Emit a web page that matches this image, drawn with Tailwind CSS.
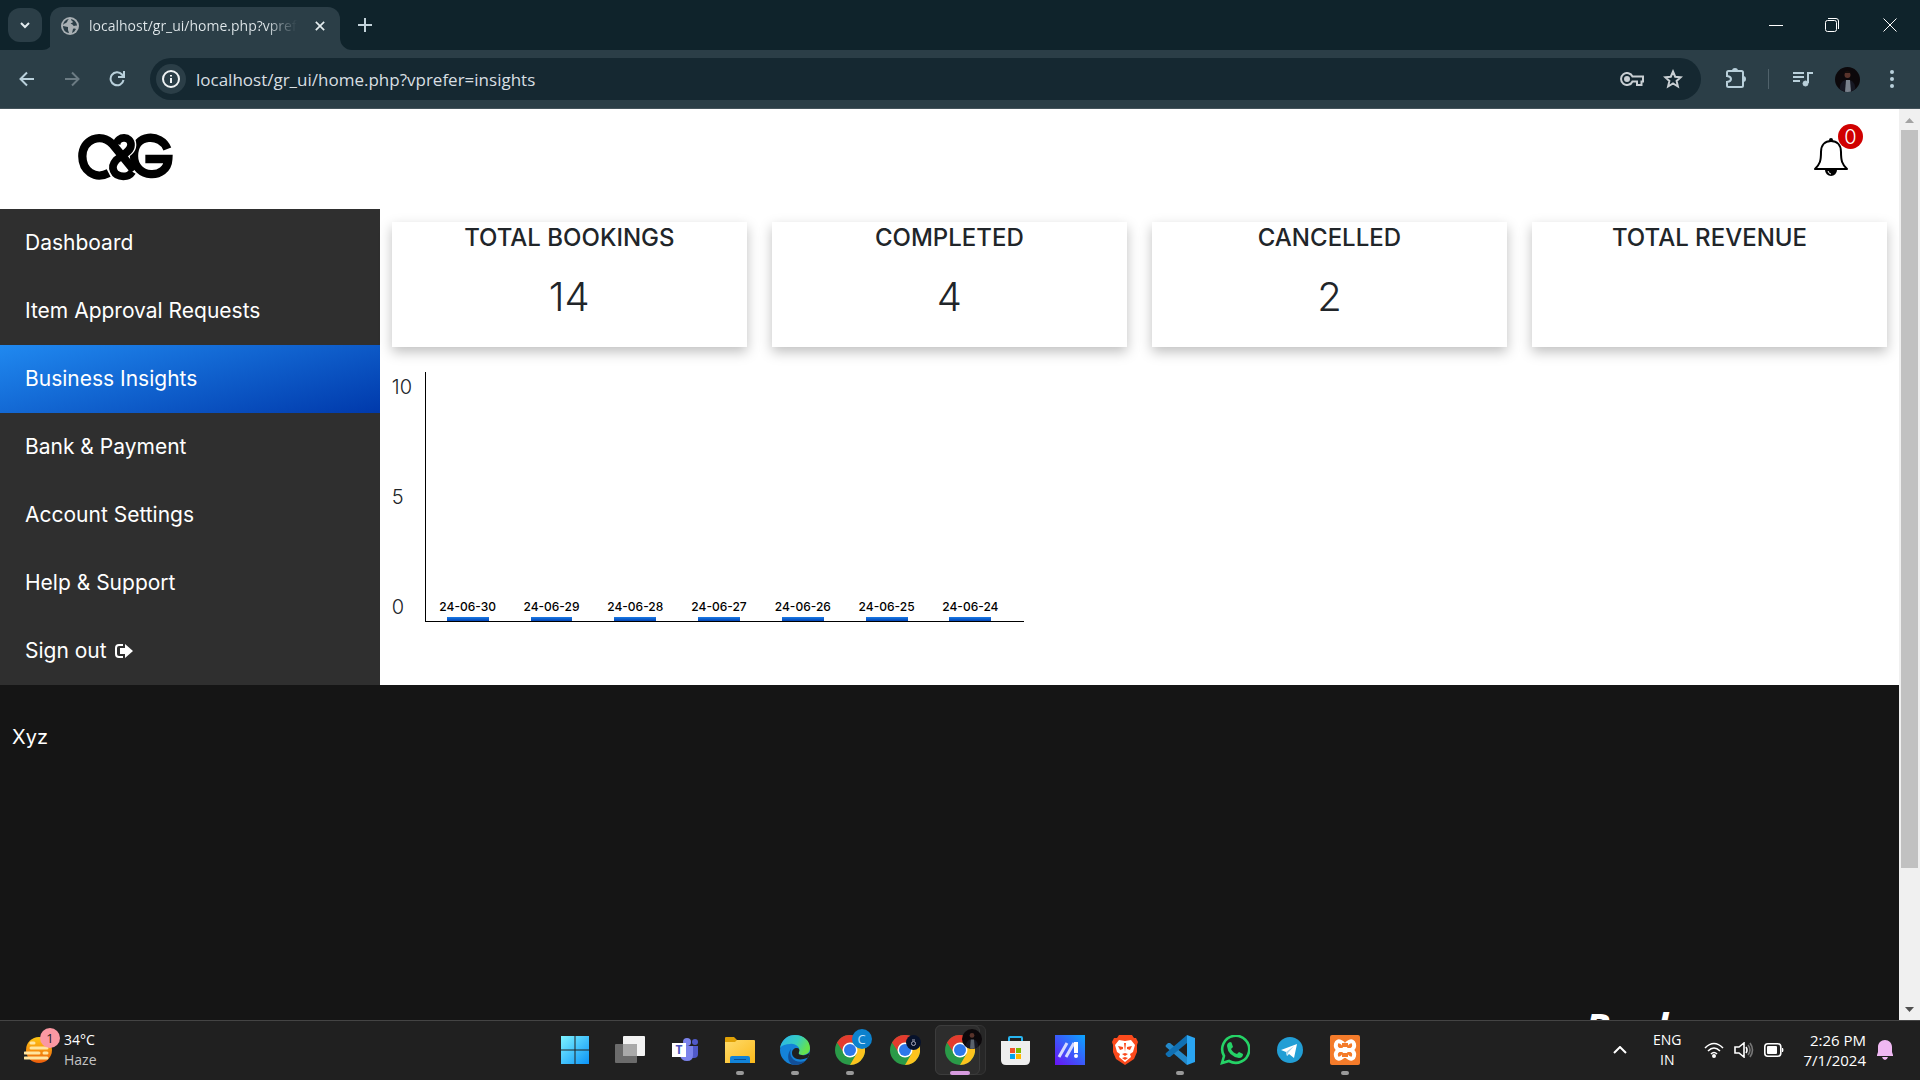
<!DOCTYPE html>
<html lang="en">
<head>
<meta charset="utf-8">
<title>Business Insights</title>
<script src="https://cdn.jsdelivr.net/npm/@tailwindcss/browser@4"></script>
</head>
<body class="flex h-screen flex-col overflow-hidden bg-white font-['Inter',sans-serif] text-[#212529]">

<svg class="absolute size-0" aria-hidden="true">
  <symbol id="chrome" viewBox="0 0 30 30">
    <circle cx="15" cy="15" r="15" fill="#2a9a48"/>
    <path d="M15 7.500H28A15 15 0 0 1 15 30l6.500-11.250Z" fill="#fcc31e"/>
    <path d="M2 7.500A15 15 0 0 1 28 7.500H15L8.500 11.250 8 16.500Z" fill="#e33b2e"/>
    <circle cx="15" cy="15" r="7.500" fill="#fff"/><circle cx="15" cy="15" r="6" fill="#2d78ea"/>
  </symbol>
  <linearGradient id="blueTile" x1="0" y1="0" x2="1" y2="1"><stop stop-color="#7df3ff"/><stop offset="1" stop-color="#0b93f7"/></linearGradient>
  <linearGradient id="edgeTop" x1="0" y1="0" x2="1" y2=".4"><stop stop-color="#2bb4ee"/><stop offset=".6" stop-color="#36cdc0"/><stop offset="1" stop-color="#66e24c"/></linearGradient>
  <linearGradient id="folder" x1="0" y1="0" x2="1" y2="1"><stop stop-color="#ffdb6b"/><stop offset="1" stop-color="#fbb91a"/></linearGradient>
  <linearGradient id="asus" x1="0" y1="1" x2="1" y2="0"><stop stop-color="#6a11f5"/><stop offset="1" stop-color="#0aa6ff"/></linearGradient>
  <linearGradient id="sun" x1="0" y1="0" x2="0" y2="1"><stop stop-color="#ffc814"/><stop offset="1" stop-color="#ec5d0c"/></linearGradient>
</svg>

<!-- Tab strip -->
<div class="flex h-[50px] shrink-0 items-end bg-[#0f232b] pl-2 font-['Open_Sans',sans-serif]">
  <button aria-label="Search tabs" class="mb-2 flex size-[34px] items-center justify-center rounded-xl bg-[#2b3e47]">
    <svg class="size-3" viewBox="0 0 12 12" fill="none" stroke="#e4ecef" stroke-width="2"><path d="M2 4l4 4 4-4"/></svg>
  </button>
  <svg class="size-3" viewBox="0 0 12 12" fill="#2b3e47"><path d="M12 0v12H0A12 12 0 0 0 12 0Z"/></svg>
  <div class="-ml-1 flex h-[43px] w-[290px] items-center rounded-t-xl bg-[#2b3e47] pb-1.5 pl-[11px] pr-3">
    <svg class="size-[18px] shrink-0" viewBox="0 0 18 18"><circle cx="9" cy="9" r="9" fill="#a9b0b4"/><path d="M8 2c-2 1-1 3-3 4S2 7 2 9c2 0 3 1 5 1v3l1 3c-4 0-6-4-6-7 0-4 3-7 6-7Zm2 0c4 1 6 4 6 7-1-1-2 0-3 0s-1-2-3-2c-1-1 2-1 2-2s-2-1-2-3Zm2 10c1-1 3 0 3 0-1 2-2 3-4 4Z" fill="#2b3e47"/></svg>
    <span class="ml-2.5 w-[210px] overflow-hidden whitespace-nowrap bg-linear-to-r from-[#e2e9ec] from-85% to-[#2b3e47] bg-clip-text text-[14px] text-transparent">localhost/gr_ui/home.php?vprefer=insights</span>
    <button aria-label="Close tab" class="ml-[15px] flex size-4 shrink-0 items-center justify-center"><svg class="size-2.5" viewBox="0 0 12 12" stroke="#e4ecef" stroke-width="2"><path d="M1 1l10 10M11 1 1 11"/></svg></button>
  </div>
  <svg class="size-3" viewBox="0 0 12 12" fill="#2b3e47"><path d="M0 0v12h12A12 12 0 0 1 0 0Z"/></svg>
  <button aria-label="New tab" class="mb-4 ml-1 flex size-[18px] items-center justify-center"><svg class="size-[14px]" viewBox="0 0 14 14" stroke="#c3d3da" stroke-width="2"><path d="M7 0v14M0 7h14"/></svg></button>
  <div class="ml-auto flex h-full items-center">
    <button aria-label="Minimize" class="flex w-[56px] justify-center"><svg class="size-[14px]" viewBox="0 0 14 14" stroke="#fff"><path d="M0 7.500h14"/></svg></button>
    <button aria-label="Restore" class="flex w-[56px] justify-center"><svg class="size-[14px]" viewBox="0 0 14 14" stroke="#fff" fill="none"><rect x=".5" y="2.500" width="11" height="11" rx="2"/><path d="M3 .5h8a2.500 2.500 0 0 1 2.500 2.500v8"/></svg></button>
    <button aria-label="Close" class="flex w-[60px] justify-center"><svg class="size-[14px]" viewBox="0 0 14 14" stroke="#fff"><path d="M.5.5l13 13M13.500.5l-13 13"/></svg></button>
  </div>
</div>

<!-- Toolbar -->
<div class="flex h-[59px] shrink-0 items-center border-b border-[#44535b] bg-[#2b3e47]">
  <button aria-label="Back" class="ml-[19px] w-[45px]"><svg class="size-4" viewBox="0 0 16 16" fill="none" stroke="#b9d0db" stroke-width="2"><path d="M15 8H2M8 1.500 1.500 8 8 14.500"/></svg></button>
  <button aria-label="Forward" class="w-[45px]"><svg class="size-4" viewBox="0 0 16 16" fill="none" stroke="#6b7b83" stroke-width="2"><path d="M1 8h13M8 1.500 14.500 8 8 14.500"/></svg></button>
  <button aria-label="Reload" class="w-[41px]"><svg class="size-4" viewBox="0 0 16 16" fill="none" stroke="#b9d0db" stroke-width="2"><path d="M14.500 9A6.500 6.500 0 1 1 13 3.500L14.500 6M15 0v6H9"/></svg></button>
  <div class="flex h-[42px] min-w-0 flex-1 items-center rounded-full bg-[#152831] pl-1.5 pr-[18px]">
    <span class="flex size-[30px] shrink-0 items-center justify-center rounded-full bg-[#2b3e47]"><svg class="size-[18px]" viewBox="0 0 18 18" fill="none" stroke="#f0f3f4" stroke-width="2"><circle cx="9" cy="9" r="8"/><path d="M9 8v5M9 5v1.500"/></svg></span>
    <input aria-label="Address" class="ml-2.5 min-w-0 flex-1 bg-transparent pt-px font-['Open_Sans',sans-serif] text-[17px] text-[#d8dfe2] outline-none" value="localhost/gr_ui/home.php?vprefer=insights">
    <button aria-label="Passwords" class="mr-[19px]"><svg class="h-[14px] w-6" viewBox="0 0 24 14" fill="none" stroke="#c9cfd3" stroke-width="2"><path d="M12.500 4.500A6 6 0 1 0 12.500 9.500H17V13h4.500V9.500H23v-5Z"/><circle cx="7" cy="7" r="2" fill="#c9cfd3"/></svg></button>
    <button aria-label="Bookmark this tab"><svg class="size-5" viewBox="0 0 20 20" fill="none" stroke="#c9cfd3" stroke-width="2"><path d="m10 2.500 2.200 5.200 5.600.5-4.200 3.700 1.300 5.600L10 14.500l-4.900 3 1.300-5.600L2.200 8.200l5.600-.5Z"/></svg></button>
  </div>
  <button aria-label="Extensions" class="ml-6"><svg class="size-[22px]" viewBox="0 0 22 22" fill="none" stroke="#b9d0db" stroke-width="2"><path d="M2 4.500q0-1.500 1.500-1.500h13Q18 3 18 4.500v13q0 1.500-1.500 1.500h-13Q2 19 2 17.500V14q4-.5 4-3T2 8Z"/><path d="M8 3a2 2 0 0 1 4 0M18 9a2 2 0 0 1 0 4" fill="#b9d0db"/></svg></button>
  <span class="ml-[21px] h-5 w-px bg-[#50626b]"></span>
  <button aria-label="Media controls" class="ml-6"><svg class="h-4 w-5" viewBox="0 0 20 16" fill="none" stroke="#b9d0db" stroke-width="2"><path d="M0 2h11M0 6h11M0 10h7M15 12V2h5"/><circle cx="12.500" cy="12.500" r="2.500" fill="#b9d0db" stroke-width="1"/></svg></button>
  <button aria-label="Profile" class="ml-[22px]"><svg class="size-[25px] rounded-full" viewBox="0 0 25 25"><rect width="25" height="25" fill="#0c080b"/><path d="M4 25q1-11 6-12h5q5 1 6 12Z" fill="#161722"/><path d="M11 13h4l1 12h-6Z" fill="#79818c"/><circle cx="12.500" cy="8" r="3" fill="#59332b"/><path d="M9 6q3.500-5 7 0Z" fill="#150d0c"/></svg></button>
  <button aria-label="Menu" class="ml-[30px] mr-[26px]"><svg class="h-[18px] w-1" viewBox="0 0 4 18" fill="#b9d0db"><circle cx="2" cy="2" r="2"/><circle cx="2" cy="9" r="2"/><circle cx="2" cy="16" r="2"/></svg></button>
</div>

<!-- Viewport -->
<div class="flex min-h-0 flex-1">
  <div class="flex min-w-0 flex-1 flex-col">
    <header class="flex h-[100px] shrink-0 items-center justify-between pb-1 pl-[78px] pr-[50px]">
      <a href="#" aria-label="C&amp;G home"><svg class="h-12 w-[95px]" viewBox="0 0 285 144" fill="none" stroke="#000" stroke-width="25">
        <path d="M268 48C250 0 168 0 168 69S268 142 271 78H202"/>
        <g stroke="#fff" stroke-width="28"><path d="M114 34C116 6 162 6 161 36 160 58 130 66 114 82 96 102 106 130 136 130 150 130 158 124 163 116"/></g>
        <path stroke-width="23" d="M116 34C118 8 160 8 159 36 158 58 130 66 114 82 96 102 106 130 136 130 150 130 158 124 163 116"/>
        <path d="M92 120C50 142 13 112 13 70 13 20 68-4 104 34L168 112"/>
      </svg></a>
      <button aria-label="Notifications" class="relative"><svg class="h-[38px] w-9" viewBox="0 0 36 38" fill="none" stroke="#000" stroke-width="2"><path d="M18 3c-6 0-10 4-10 11 0 9-1 12-6 17h32c-5-5-6-8-6-17 0-7-4-11-10-11Z" stroke-linejoin="round"/><path d="M13 32a5 5 0 0 0 10 0Z" fill="#000"/><circle cx="18" cy="2" r="1"/><path d="M15 33q1 3 3 3" stroke="#fff" stroke-width="1"/></svg>
        <span class="absolute -right-3.5 -top-3.5 flex size-[25px] items-center justify-center rounded-full bg-[#d00000] text-xl font-light text-white">0</span></button>
    </header>

    <div class="flex shrink-0">
      <nav class="flex w-1/5 shrink-0 flex-col bg-[#2f2f2f] text-[21px] text-white">
        <a href="#" class="flex h-[68px] items-center px-[25px]">Dashboard</a>
        <a href="#" class="flex h-[68px] items-center px-[25px]">Item Approval Requests</a>
        <a href="#" class="flex h-[68px] items-center bg-[linear-gradient(165deg,#2089f0,#0039ab)] px-[25px]">Business Insights</a>
        <a href="#" class="flex h-[68px] items-center px-[25px]">Bank &amp; Payment</a>
        <a href="#" class="flex h-[68px] items-center px-[25px]">Account Settings</a>
        <a href="#" class="flex h-[68px] items-center px-[25px]">Help &amp; Support</a>
        <a href="#" class="flex h-[68px] items-center gap-2 px-[25px]">Sign out <svg class="h-4 w-[18px]" viewBox="0 0 18 16" fill="#fff"><path d="M5 5h5V1l8 7-8 7v-4H5Z"/><path d="M8 2H4Q1 2 1 5v6q0 3 3 3h4" fill="none" stroke="#fff" stroke-width="2"/></svg></a>
      </nav>

      <main class="min-w-0 flex-1 px-3 pt-[13px]">
        <section class="grid grid-cols-4 gap-[25px] text-center">
          <div class="h-[125px] bg-white shadow-[0_5px_12px_rgba(0,0,0,0.25)]"><h2 class="text-2xl font-medium leading-8">TOTAL BOOKINGS</h2><p class="mt-4 text-[40px] font-light leading-[54px]">14</p></div>
          <div class="h-[125px] bg-white shadow-[0_5px_12px_rgba(0,0,0,0.25)]"><h2 class="text-2xl font-medium leading-8">COMPLETED</h2><p class="mt-4 text-[40px] font-light leading-[54px]">4</p></div>
          <div class="h-[125px] bg-white shadow-[0_5px_12px_rgba(0,0,0,0.25)]"><h2 class="text-2xl font-medium leading-8">CANCELLED</h2><p class="mt-4 text-[40px] font-light leading-[54px]">2</p></div>
          <div class="h-[125px] bg-white shadow-[0_5px_12px_rgba(0,0,0,0.25)]"><h2 class="text-2xl font-medium leading-8">TOTAL REVENUE</h2></div>
        </section>
        <section class="mt-[25px] flex h-[250px] w-[42.3%]">
          <div class="flex w-[33px] shrink-0 flex-col justify-between text-xl font-light leading-[30px]"><span>10</span><span>5</span><span>0</span></div>
          <div class="flex flex-1 items-end border-b border-l border-black text-[12px] font-medium leading-4 text-black">
            <div class="flex w-[14%] flex-col items-center gap-0.5 whitespace-nowrap">24-06-30<span class="h-1 w-1/2 bg-linear-to-b from-[#1a7ae6] to-[#0544b4]"></span></div>
            <div class="flex w-[14%] flex-col items-center gap-0.5 whitespace-nowrap">24-06-29<span class="h-1 w-1/2 bg-linear-to-b from-[#1a7ae6] to-[#0544b4]"></span></div>
            <div class="flex w-[14%] flex-col items-center gap-0.5 whitespace-nowrap">24-06-28<span class="h-1 w-1/2 bg-linear-to-b from-[#1a7ae6] to-[#0544b4]"></span></div>
            <div class="flex w-[14%] flex-col items-center gap-0.5 whitespace-nowrap">24-06-27<span class="h-1 w-1/2 bg-linear-to-b from-[#1a7ae6] to-[#0544b4]"></span></div>
            <div class="flex w-[14%] flex-col items-center gap-0.5 whitespace-nowrap">24-06-26<span class="h-1 w-1/2 bg-linear-to-b from-[#1a7ae6] to-[#0544b4]"></span></div>
            <div class="flex w-[14%] flex-col items-center gap-0.5 whitespace-nowrap">24-06-25<span class="h-1 w-1/2 bg-linear-to-b from-[#1a7ae6] to-[#0544b4]"></span></div>
            <div class="flex w-[14%] flex-col items-center gap-0.5 whitespace-nowrap">24-06-24<span class="h-1 w-1/2 bg-linear-to-b from-[#1a7ae6] to-[#0544b4]"></span></div>
          </div>
        </section>
      </main>
    </div>

    <footer class="min-h-0 flex-1 overflow-hidden bg-[#151515] px-3 pt-9 text-white">
      <p class="text-xl leading-8">Xyz</p>
      <p class="mr-[208px] mt-[246px] text-right font-['Open_Sans',sans-serif] text-[40px] font-bold italic leading-[56px]">Book</p>
    </footer>
  </div>

  <!-- Scrollbar -->
  <div class="flex w-[21px] shrink-0 flex-col items-center bg-[#f0f0f0]" aria-hidden="true">
    <svg class="h-[21px] w-[9px] shrink-0" viewBox="0 0 9 21" fill="#a3a3a3"><path d="M0 14l4.500-5L9 14Z"/></svg>
    <div class="h-[81%] w-[17px] bg-[#c1c1c1]"></div>
    <svg class="mt-auto h-[21px] w-[9px] shrink-0" viewBox="0 0 9 21" fill="#505050"><path d="M0 8l4.500 5L9 8Z"/></svg>
  </div>
</div>

<!-- Taskbar -->
<div class="grid h-[60px] shrink-0 grid-cols-[1fr_auto_1fr] border-t border-[#444] bg-[#202020] font-['Open_Sans',sans-serif] text-[14px] leading-5 text-white">
  <button class="flex items-center gap-3 justify-self-start pb-px pl-6 text-left">
    <span class="relative"><svg class="size-7" viewBox="0 0 28 28"><circle cx="15" cy="14" r="13" fill="url(#sun)"/><path d="M7 7h3M7 12h16M1 17h14M20 17h3M1 22h22" stroke="#ffe5a0" stroke-width="3" stroke-linecap="round"/></svg>
      <span class="absolute -right-2 -top-2 flex size-5 items-center justify-center rounded-full bg-[#fb98a2] text-[13px] text-[#222]">1</span></span>
    <span>34°C<br><span class="text-[#c4c4c4]">Haze</span></span>
  </button>

  <div class="flex pb-px">
    <button aria-label="Start" class="flex w-[55px] items-center justify-center"><svg class="size-[30px]" viewBox="0 0 30 30" fill="url(#blueTile)"><path d="M1 1h13.500v13.500H1ZM15.500 1H29v13.500H15.500ZM1 15.500h13.500V29H1ZM15.500 15.500H29V29H15.500Z"/></svg></button>
    <button aria-label="Task view" class="flex w-[55px] items-center justify-center"><svg class="size-[30px]" viewBox="0 0 30 30"><rect x="8" y="1" width="22" height="20" rx="1" fill="#f3f3f3"/><rect y="9" width="22" height="19" rx="1" fill="#6b6b6b"/><path d="M8 9h14v12H8Z" fill="#a9a9a9"/></svg></button>
    <button aria-label="Teams" class="flex w-[55px] items-center justify-center"><svg class="size-[30px]" viewBox="0 0 30 30"><circle cx="17" cy="7" r="4" fill="#7b83eb"/><circle cx="25" cy="7" r="3" fill="#5059c9"/><path d="M20 11h8v8q0 4-4 4h-4Z" fill="#5059c9"/><path d="M10 11h13v9q0 6-6 6t-7-6Z" fill="#7b83eb"/><rect x="2" y="8" width="14" height="14" fill="#fff"/><text x="9" y="19" text-anchor="middle" font-family="Open Sans" font-size="12" font-weight="700" fill="#4b53bc">T</text></svg></button>
    <button aria-label="File Explorer" class="relative flex w-[55px] items-center justify-center"><svg class="size-[30px]" viewBox="0 0 30 30"><path d="M0 3q0-1 1-1h8l3 3v5H0Z" fill="#e0a106"/><path d="M0 7h10l2-2h17q1 0 1 1v22H0Z" fill="url(#folder)"/><path d="M5 28v-5q0-2 2-2h16q2 0 2 2v5Z" fill="#1283d8"/><path d="M9 24.500h12" stroke="#0a4f93"/></svg><span class="absolute bottom-1 h-1 w-2 rounded-full bg-[#9a9a9a]"></span></button>
    <button aria-label="Edge" class="relative flex w-[55px] items-center justify-center"><svg class="size-[30px]" viewBox="0 0 30 30"><circle cx="15" cy="15" r="15" fill="#1482d8"/><path d="M0 13C2 4 8 0 15 0c9 0 15 6 15 13 0 5-4 7-8 7-3 0-4-1-3-3 2-5-4-9-9-8C6 9 2 10 0 13Z" fill="url(#edgeTop)"/><path d="M11 14c-3 8 4 15 14 12-3 3-6 4-10 4-7 0-9-10-4-16Z" fill="#124f98"/><path d="M19 17c-1 2 0 3 3 3 3 1 6-1 8-3-1 4-2 6-3 6-7 3-15 1-15-5 0-3 2-5 5-5 2 0 3 2 2 4Z" fill="#202020"/></svg><span class="absolute bottom-1 h-1 w-2 rounded-full bg-[#9a9a9a]"></span></button>
    <button aria-label="Chrome, profile C" class="relative flex w-[55px] items-center justify-center"><svg class="size-[30px]"><use href="#chrome"/></svg><span class="absolute right-1.5 top-2 flex size-5 items-center justify-center rounded-full bg-[#0c81cd] text-[13px] text-[#bfe4ff]">C</span><span class="absolute bottom-1 h-1 w-2 rounded-full bg-[#9a9a9a]"></span></button>
    <button aria-label="Chrome, second profile" class="relative flex w-[55px] items-center justify-center"><svg class="size-[30px]"><use href="#chrome"/></svg><svg class="absolute right-3 top-3.5 size-[15px]" viewBox="0 0 15 15"><circle cx="7.500" cy="7.500" r="7.500" fill="#07122b"/><circle cx="7.500" cy="8.500" r="2" fill="none" stroke="#aab"/><path d="M6 5h3" stroke="#aab"/></svg></button>
    <button aria-label="Chrome, current window" class="relative flex w-[55px] items-center justify-center"><span class="absolute inset-y-1 left-0.5 right-0.5 rounded-md border border-[#343434] bg-[#272727]"></span><span class="absolute inset-y-1 left-0.5 right-2 rounded-md border border-[#3c3c3c] bg-[#2d2d2d]"></span><svg class="relative size-[30px]"><use href="#chrome"/></svg><svg class="absolute right-1.5 top-2 size-5 rounded-full" viewBox="0 0 25 25"><rect width="25" height="25" fill="#0c080b"/><path d="M4 25q1-11 6-12h5q5 1 6 12Z" fill="#161722"/><path d="M11 13h4l1 12h-6Z" fill="#59616c"/><circle cx="12.500" cy="8" r="3" fill="#59332b"/></svg><span class="absolute bottom-1 h-1 w-5 rounded-full bg-[#d79be0]"></span></button>
    <button aria-label="Microsoft Store" class="flex w-[55px] items-center justify-center"><svg class="size-[30px]" viewBox="0 0 30 30"><path d="M9 7V3q0-1 1-1h11q1 0 1 1v4" fill="none" stroke="#27b5f0" stroke-width="2"/><path d="M1 6h29v19q0 5-5 5H6q-5 0-5-5Z" fill="#eee"/><path d="M10 13h5v5h-5Z" fill="#f0512a"/><path d="M16 13h5v5h-5Z" fill="#7fba00"/><path d="M10 19h5v5h-5Z" fill="#00a4ef"/><path d="M16 19h5v5h-5Z" fill="#ffb900"/></svg></button>
    <button aria-label="MyASUS" class="flex w-[55px] items-center justify-center"><svg class="size-[30px]" viewBox="0 0 30 30"><path d="M0 0h30v30H0Z" fill="url(#asus)"/><path d="m4 22 8-14M11 22l8-14" stroke="#d5d9ff" stroke-width="3"/><path d="M19 7h4v11h-4Z" fill="#fff"/><circle cx="21" cy="21" r="2" fill="#fff"/></svg></button>
    <button aria-label="Brave" class="flex w-[55px] items-center justify-center"><svg class="size-[30px]" viewBox="0 0 30 30"><path d="M9 0h13l2 3h2l2 4-1 3v7l-3 7-9 6-9-6-3-7v-7L2 7l2-4h3Z" fill="#fb4a1c"/><path d="m9 5 6 1 6-1 4 5-2 7-3 2 1 3-6 5-6-5 1-3-3-2-2-7Z" fill="#fff"/><path d="m8 11 5 1v2l-3 1Zm14 0-5 1v2l3 1ZM12 19l3-1 3 1-3 2ZM12 23l3-1 3 1-3 2ZM14 8h2l-1 9Z" fill="#fb4a1c"/></svg></button>
    <button aria-label="VS Code" class="relative flex w-[55px] items-center justify-center"><svg class="size-[30px]" viewBox="0 0 30 30"><path d="M22 30 1 12q-1-1 0-2l2-2q1 0 2 0l17 14Z" fill="#2489ca"/><path d="M22 0 1 18q-1 1 0 2l2 2q1 0 2 0L22 8Z" fill="#1070b3"/><path d="m22 0 8 3v24l-8 3Z" fill="#2aa5f2"/></svg><span class="absolute bottom-1 h-1 w-2 rounded-full bg-[#9a9a9a]"></span></button>
    <button aria-label="WhatsApp" class="flex w-[55px] items-center justify-center"><svg class="size-[30px]" viewBox="0 0 30 30"><path d="M2 28l2-7A13.500 13.500 0 1 1 9 26Z" fill="none" stroke="#25d366" stroke-width="2.600"/><path d="M10 7q2 0 2 2l1 3-2 2q2 4 6 5l2-2 4 2q0 4-4 4Q8 21 7 11q0-3 3-4Z" fill="#25d366"/></svg></button>
    <button aria-label="Telegram" class="flex w-[55px] items-center justify-center"><svg class="size-[30px]" viewBox="0 0 30 30"><circle cx="15" cy="15" r="13" fill="#229ed5"/><path d="m6 15 16-6-3 14-5-4-2 2-1-4Z" fill="#fff"/><path d="m11 17 8-6-6 7-1 3Z" fill="#a5d3ea"/></svg></button>
    <button aria-label="XAMPP" class="relative flex w-[55px] items-center justify-center"><svg class="size-[30px]" viewBox="0 0 30 30"><rect width="30" height="30" rx="2" fill="#f47b2a"/><path d="M9 15h12M9 15q-4-2-3-6t5-2q4 2 4 8 0-6 4-8t5 2-3 6q4 2 3 6t-5 2q-4-2-4-8 0 6-4 8t-5-2 3-6Z" fill="none" stroke="#fff" stroke-width="4"/><path d="M12 8v4h6V8M12 22v-4h6v4" fill="#f47b2a"/></svg><span class="absolute bottom-1 h-1 w-2 rounded-full bg-[#9a9a9a]"></span></button>
  </div>

  <div class="flex items-center justify-self-end pb-px pr-[27px]">
    <button aria-label="Show hidden icons" class="mr-[26px]"><svg class="h-2 w-[14px]" viewBox="0 0 14 8" fill="none" stroke="#fff" stroke-width="2"><path d="m1 7 6-6 6 6"/></svg></button>
    <button class="mr-[22px] text-center">ENG<br>IN</button>
    <button aria-label="Network, volume and battery" class="mr-5 flex items-center gap-2.5">
      <svg class="h-4 w-5" viewBox="0 0 20 16" fill="none" stroke="#fff" stroke-width="2"><path d="M1 6q9-9 18 0M4 9q6-6 12 0M7 12q3-3 6 0" stroke-width="1.600"/><circle cx="10" cy="14" r="1" fill="#fff"/></svg>
      <svg class="h-4 w-5" viewBox="0 0 20 16" fill="none" stroke="#fff" stroke-width="1.600"><path d="M1 5h4l5-4v14l-5-4H1ZM12 5q2 3 0 6"/><path d="M14 3q4 5 0 10M16 1q5 7 0 14" stroke="#777"/></svg>
      <svg class="h-3.5 w-5" viewBox="0 0 20 14"><rect x=".8" y=".8" width="16" height="12.400" rx="3" fill="none" stroke="#fff" stroke-width="1.600"/><rect x="3" y="3" width="10" height="8" rx="1" fill="#fff"/><path d="M18 5h1q1 2 0 4h-1Z" fill="#fff"/></svg>
    </button>
    <button class="mr-[11px] text-right text-[15px] leading-5">2:26 PM<br>7/1/2024</button>
    <button aria-label="Notification center"><svg class="h-5 w-4" viewBox="0 0 16 20" fill="#efb8f2"><path d="M8 0C4 0 1 3 1 7v5l-1 3v1h16v-1l-1-3V7c0-4-3-7-7-7ZM5 17h6q-1 3-3 3t-3-3Z"/></svg></button>
  </div>
</div>
</body>
</html>
